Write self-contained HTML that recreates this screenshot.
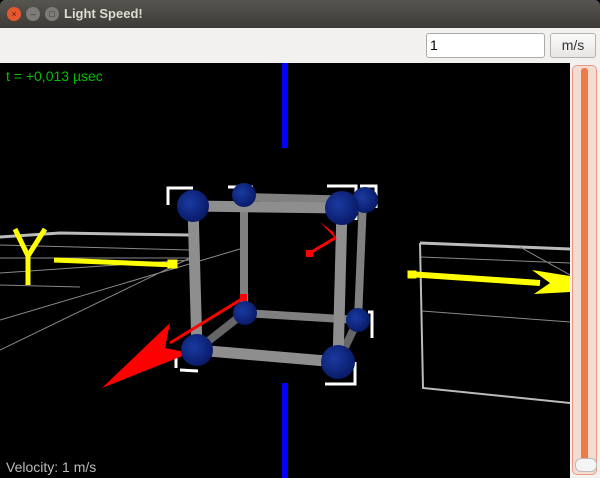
<!DOCTYPE html>
<html><head><style>
body{margin:0;width:600px;height:478px;overflow:hidden;font-family:"Liberation Sans",sans-serif;background:#000;position:relative}
.tb{position:absolute;left:0;top:0;width:600px;height:28px;background:linear-gradient(#56554f,#3c3b37);border-radius:5px 5px 0 0}
.tb span{position:absolute;left:64px;top:6px;color:#dfdbd2;font-weight:bold;font-size:13px}
.b{position:absolute;top:7px;width:14px;height:14px;border-radius:50%;font-size:9px;text-align:center;line-height:14px;color:#333}
.tool{position:absolute;left:0;top:28px;width:600px;height:35px;background:#f2f1f0}
.inp{position:absolute;left:426px;top:5px;background:#fff;border:1px solid #aaa;border-radius:3px;font-size:14px;line-height:22px;padding-left:3px;box-sizing:border-box;width:119px;height:25px}
.btn{position:absolute;left:550px;top:5px;width:46px;height:25px;background:linear-gradient(#fafafa,#e8e6e4);border:1px solid #b5b3b0;border-radius:3px;box-sizing:border-box;font-size:14px;text-align:center;line-height:23px;color:#333}
.side{position:absolute;left:570px;top:63px;width:30px;height:415px;background:#f2f1f0}
</style></head><body>
<div class="tb"><div class="b" style="left:7px;background:#e5582e;color:#5a1a0a">×</div><div class="b" style="left:26px;background:#7d7c78">–</div><div class="b" style="left:45px;background:#7d7c78">□</div><span>Light Speed!</span></div>
<div class="tool"><div class="inp">1</div><div class="btn">m/s</div></div>
<div class="side"><div style="position:absolute;left:2px;top:2px;width:25px;height:410px;border:1px solid #e89a80;border-radius:5px;background:#f4dcd2;box-sizing:border-box"></div><div style="position:absolute;left:11px;top:5px;width:7px;height:400px;background:#f07a4a;border-radius:3px"></div><div style="position:absolute;left:5px;top:395px;width:20px;height:12px;background:#f4f4f4;border:1px solid #bbb;border-radius:6px"></div></div>
<svg style="position:absolute;left:0;top:63px" width="570" height="415" viewBox="0 63 570 415">
<defs><radialGradient id="g" cx="0.4" cy="0.4" r="0.7"><stop offset="0" stop-color="#1a3aa0"/><stop offset="1" stop-color="#061660"/></radialGradient></defs>
<g stroke="#bbb" fill="none">
<path d="M0 237 L60 233 L120 234 L190 235" stroke-width="3"/>
<path d="M0 245 L190 250 M0 258 L190 258 M0 273 L190 260 M0 285 L80 287 M0 320 L240 249 M0 350 L190 258" stroke="#888" stroke-width="1"/>
<path d="M420 243 L520 247 L570 249" stroke-width="3"/>
<path d="M420 243 L423 388 L570 403" stroke-width="2"/>
<path d="M421 257 L570 263 M422 311 L570 322 M520 247 L570 275" stroke="#888" stroke-width="1"/>
</g>
<rect x="282" y="63" width="6" height="85" fill="#0000ff"/>
<rect x="282" y="383" width="6" height="95" fill="#0000ff"/>
<g fill="#ff0" stroke="#ff0">
<path d="M54 260 L175 265" stroke-width="5"/><rect x="168" y="260" width="9" height="8"/>
<path d="M15 229 L28 256 L45 229 M28 256 L28 285" stroke-width="5" fill="none"/>
<path d="M408 274 L540 283" stroke-width="6"/><rect x="408" y="271" width="8" height="7"/>
<path d="M532 270 L570 276 L570 292 L534 294 L550 283 Z" stroke="none"/>
</g>
<g stroke="#fff" stroke-width="3" fill="none">
<path d="M168 205 L168 188 L193 188 M228 187 L253 187 M327 186 L356 186 L356 220 M360 186 L376 186 L376 208 M368 312 L372 312 L372 338 M176 355 L176 368 M180 370 L198 371 M325 384 L355 384 L355 362"/>
</g>
<g stroke="#888" stroke-linecap="round">
<path d="M244 197 L244 313 M244 313 L358 320 M358 320 L363 200 M244 197 L361 200" stroke-width="8" stroke="#808080"/>
<path d="M197 350 L244 313 M338 362 L358 320" stroke-width="8" stroke="#666"/>
<path d="M193 206 L342 208 M193 206 L197 350 M342 208 L338 362 M197 350 L338 362" stroke-width="11" stroke="#8e8e8e"/>
</g>
<g fill="#ff0000" stroke="#ff0000">
<path d="M245 297 L170 343" stroke-width="3"/>
<path d="M102 388 L170 323 L165 348 L190 353 Z" stroke="none"/>
<rect x="240" y="294" width="7" height="7" stroke="none"/>
<path d="M310 253 L335 238" stroke-width="3"/><rect x="306" y="250" width="7" height="7" stroke="none"/>
<path d="M320 222 L333 232 L337 240 Z" stroke="none"/>
</g>
<g fill="url(#g)">
<circle cx="244" cy="195" r="12"/><circle cx="365" cy="200" r="13"/><circle cx="245" cy="313" r="12"/><circle cx="358" cy="320" r="12"/>
<circle cx="193" cy="206" r="16"/><circle cx="342" cy="208" r="17"/><circle cx="197" cy="350" r="16"/><circle cx="338" cy="362" r="17"/>
</g>
<text x="6" y="81" fill="#00c000" font-size="14" font-family="Liberation Sans, DejaVu Sans, sans-serif">t =  +0,013 µsec</text>
<text x="6" y="472" fill="#bbb" font-size="14" font-family="Liberation Sans, DejaVu Sans, sans-serif">Velocity: 1 m/s</text>
</svg>
</body></html>
